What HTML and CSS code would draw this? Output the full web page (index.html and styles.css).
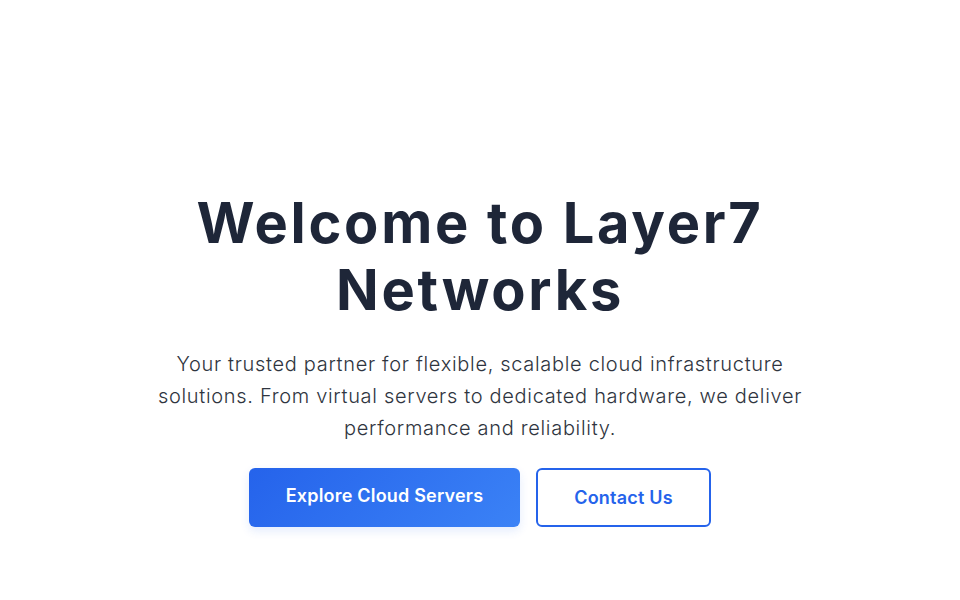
FILE: index.html
```html
<!DOCTYPE html>
<html lang="en">
<head>
<meta charset="utf-8">
<title>Layer7 Networks</title>
<link rel="stylesheet" href="styles.css">
</head>
<body>
<section class="hero">
  <div class="hero-inner">
    <h1 class="hero-title">Welcome to Layer7 Networks</h1>
    <p class="hero-text">Your trusted partner for flexible, scalable cloud infrastructure solutions. From virtual servers to dedicated hardware, we deliver performance and reliability.</p>
    <div class="hero-actions">
      <a class="btn btn-primary" href="#">Explore Cloud Servers</a>
      <a class="btn btn-outline" href="#">Contact Us</a>
    </div>
  </div>
</section>
</body>
</html>
```
FILE: styles.css
```css
html, body {
  margin: 0;
  padding: 0;
  background: #ffffff;
}
body {
  font-family: "Inter", "Open Sans", sans-serif;
  color: #1e293b;
}
.hero {
  height: 600px;
  box-sizing: border-box;
  padding-top: 190px;
  display: flex;
  justify-content: center;
}
.hero-inner {
  width: 660px;
  display: flex;
  flex-direction: column;
  align-items: center;
  text-align: center;
}
.hero-title {
  margin: 0;
  font-size: 56px;
  line-height: 67px;
  font-weight: 700;
  color: #1e2638;
  letter-spacing: 2.7px;
  width: 640px;
}
.hero-text {
  margin: 24px 0 0;
  width: 656px;
  font-size: 20px;
  line-height: 32px;
  font-weight: 300;
  letter-spacing: 0.68px;
  color: #2f3540;
}
.hero-actions {
  margin-top: 24px;
  display: flex;
  gap: 16px;
}
.btn {
  box-sizing: border-box;
  height: 59px;
  display: flex;
  align-items: center;
  justify-content: center;
  border-radius: 6px;
  font-size: 18px;
  font-weight: 600;
  letter-spacing: 0.2px;
  text-decoration: none;
}
.btn-primary {
  width: 271px;
  color: #ffffff;
  background: linear-gradient(135deg, #2563eb 0%, #3b82f6 100%);
  box-shadow: 0 4px 10px rgba(37, 99, 235, 0.12);
  padding-bottom: 5px;
}
.btn-outline {
  width: 175px;
  color: #2563eb;
  border: 2px solid #2563eb;
  background: #ffffff;
}
```
